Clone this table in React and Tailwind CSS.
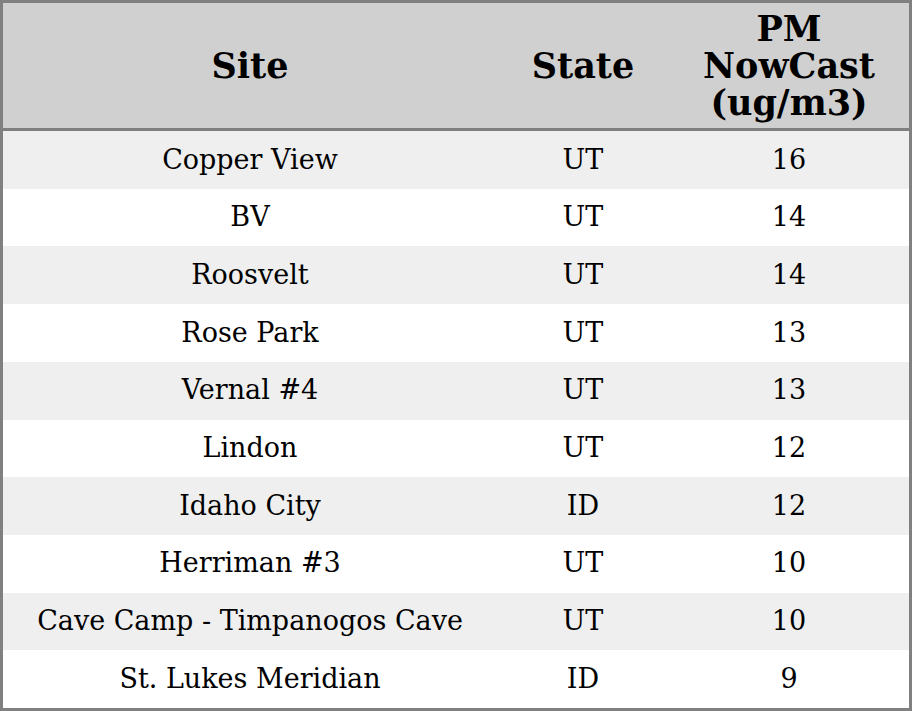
const rows = [
    { site: 'Copper View', state: 'UT', pm: 16 },
    { site: 'BV', state: 'UT', pm: 14 },
    { site: 'Roosvelt', state: 'UT', pm: 14 },
    { site: 'Rose Park', state: 'UT', pm: 13 },
    { site: 'Vernal #4', state: 'UT', pm: 13 },
    { site: 'Lindon', state: 'UT', pm: 12 },
    { site: 'Idaho City', state: 'ID', pm: 12 },
    { site: 'Herriman #3', state: 'UT', pm: 10 },
    { site: 'Cave Camp - Timpanogos Cave', state: 'UT', pm: 10 },
    { site: 'St. Lukes Meridian', state: 'ID', pm: 9 },
]

const App = () => {
    return (
        <div className="w-[912px] h-[711px] border-[3px] border-[#808080] bg-white text-black font-['DejaVu_Serif',serif] overflow-hidden">
            {/* Header */}
            <div className="grid grid-cols-[494px_172px_240px] h-[128px] bg-[#d0d0d0] border-b-[3px] border-[#808080] font-bold text-[35px] leading-[37px]">
                <div className="flex items-center justify-center">Site</div>
                <div className="flex items-center justify-center">State</div>
                <div className="flex flex-col items-center justify-center text-center">
                    <span>PM</span>
                    <span>NowCast</span>
                    <span>(ug/m3)</span>
                </div>
            </div>

            {/* Rows */}
            <div className="grid grid-rows-10 h-[577px] text-[27px]">
                {rows.map((r, idx) => (
                    <div
                        key={idx}
                        className={`grid grid-cols-[494px_172px_240px] items-center text-center ${idx % 2 === 0 ? 'bg-[#efefef]' : 'bg-white'}`}
                    >
                        <div>{r.site}</div>
                        <div>{r.state}</div>
                        <div>{r.pm}</div>
                    </div>
                ))}
            </div>
        </div>
    )
}

export default App
